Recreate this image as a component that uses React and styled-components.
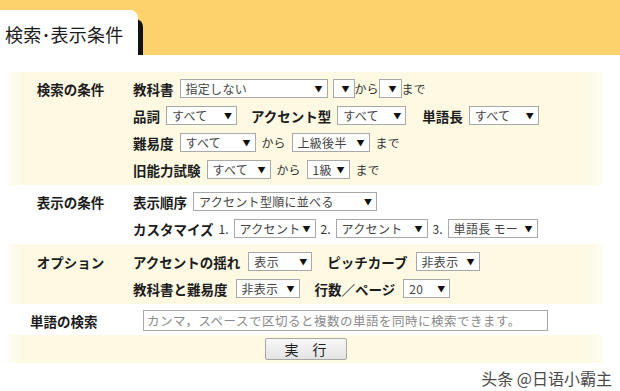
import React from 'react';
import styled, { createGlobalStyle } from 'styled-components';

const GlobalStyle = createGlobalStyle`
  html, body {
    margin: 0;
    padding: 0;
    background: #fff;
  }
  body {
    width: 620px;
    height: 391px;
    overflow: hidden;
    font-family: "Noto Sans CJK JP", "Noto Sans", sans-serif;
    color: #222;
  }
`;

const Header = styled.div`
  height: 55px;
  background: #fdd16c;
  overflow: hidden;
  display: flex;
  align-items: flex-end;
`;

const Tab = styled.div`
  width: 133px;
  height: 45px;
  padding-left: 5px;
  background: #fff;
  border-top-right-radius: 8px;
  box-shadow: 5px 9px 0 #111;
  font-size: 18px;
  line-height: 48px;
  color: #1a1a1a;
  letter-spacing: 0.2px;
`;

const Panel = styled.div`
  padding: 17px 17px 0 8px;
`;

const cream =
  'linear-gradient(to right, #fffdf4, #fdf9e3 14px, #fdf9e3 calc(100% - 14px), #fffdf6)';

const Section = styled.div`
  display: grid;
  grid-template-columns: 125px 1fr;
  padding: ${(p) => p.$pad || '3px 0 2px'};
  background: ${(p) => (p.$cream ? cream : '#fff')};
`;

const SectionLabel = styled.div`
  height: 27px;
  display: flex;
  align-items: center;
  justify-content: ${(p) => (p.$left ? 'flex-start' : 'center')};
  padding-left: ${(p) => (p.$left ? '22px' : '0')};
  font-size: 13.5px;
  font-weight: 700;
  color: #1c1c1c;
`;

const Lines = styled.div`
  display: flex;
  flex-direction: column;
`;

const Line = styled.div`
  height: 27px;
  display: flex;
  align-items: center;
  gap: ${(p) => p.$gap || '6px'};
  font-size: 12px;
`;

const Field = styled.span`
  font-size: 13.5px;
  font-weight: 700;
  color: #1c1c1c;
  margin-left: ${(p) => p.$ml || '0'};
`;

const Word = styled.span`
  font-size: 12px;
  color: #333;
  margin: ${(p) => p.$m || '0'};
`;

const SelectBox = styled.span`
  box-sizing: border-box;
  width: ${(p) => p.$w}px;
  height: 19px;
  display: inline-flex;
  align-items: center;
  gap: 2px;
  border: 1px solid #a9a9a9;
  background: #fff;
  padding: 0 4px 0 5px;
  font-size: 12px;
  color: #444;
  margin: ${(p) => p.$m || '0'};
`;

const SelectText = styled.span`
  flex: 1;
  min-width: 0;
  overflow: hidden;
  white-space: nowrap;
  letter-spacing: 0.3px;
`;

const Arrow = styled.span`
  flex: none;
  font-size: 8px;
  color: #111;
  line-height: 1;
`;

const TextInput = styled.input`
  box-sizing: border-box;
  width: 405px;
  height: 21px;
  margin-left: 10px;
  border: 1px solid #a9a9a9;
  padding: 0 3px;
  font-family: inherit;
  font-size: 12.5px;
  letter-spacing: 0.5px;
  &::placeholder {
    color: #8a8a8a;
  }
`;

const ButtonRow = styled.div`
  height: 28px;
  display: flex;
  align-items: center;
  justify-content: center;
  background: ${cream};
`;

const RunButton = styled.button`
  width: 82px;
  height: 22px;
  border: 1px solid #a8a8a8;
  border-radius: 2px;
  background: linear-gradient(#f8f8f8, #e3e3e3);
  font-family: inherit;
  font-size: 14px;
  color: #222;
  letter-spacing: 14px;
  padding: 0 0 0 14px;
`;

const Footer = styled.div`
  display: flex;
  justify-content: flex-end;
  padding: 5px 8px 0 0;
  font-family: "Noto Sans CJK SC", sans-serif;
  font-size: 16px;
  line-height: 20px;
  color: #4a4a4a;
`;

const Select = ({ w, children, m }) => (
  <SelectBox $w={w} $m={m}>
    <SelectText>{children}</SelectText>
    <Arrow>▼</Arrow>
  </SelectBox>
);

const App = () => (
  <>
    <GlobalStyle />
    <Header>
      <Tab>検索･表示条件</Tab>
    </Header>
    <Panel>
      <Section $cream>
        <SectionLabel>検索の条件</SectionLabel>
        <Lines>
          <Line>
            <Field>教科書</Field>
            <Select w={148}>指定しない</Select>
            <Select w={22} m="0 0 0 -1px" />
            <Word $m="0 -6px">から</Word>
            <Select w={23} />
            <Word $m="0 0 0 -6px">まで</Word>
          </Line>
          <Line>
            <Field>品詞</Field>
            <Select w={71}>すべて</Select>
            <Field $ml="8px">アクセント型</Field>
            <Select w={69}>すべて</Select>
            <Field $ml="10px">単語長</Field>
            <Select w={70}>すべて</Select>
          </Line>
          <Line>
            <Field>難易度</Field>
            <Select w={76}>すべて</Select>
            <Word>から</Word>
            <Select w={78}>上級後半</Select>
            <Word>まで</Word>
          </Line>
          <Line>
            <Field>旧能力試験</Field>
            <Select w={64}>すべて</Select>
            <Word>から</Word>
            <Select w={43}>1級</Select>
            <Word>まで</Word>
          </Line>
        </Lines>
      </Section>

      <Section>
        <SectionLabel>表示の条件</SectionLabel>
        <Lines>
          <Line>
            <Field>表示順序</Field>
            <Select w={184}>アクセント型順に並べる</Select>
          </Line>
          <Line $gap="5px">
            <Field>カスタマイズ</Field>
            <Word>1.</Word>
            <Select w={82}>アクセント</Select>
            <Word>2.</Word>
            <Select w={92}>アクセント</Select>
            <Word>3.</Word>
            <Select w={90}>単語長 モー</Select>
          </Line>
        </Lines>
      </Section>

      <Section $cream $pad="4px 0 2px">
        <SectionLabel>オプション</SectionLabel>
        <Lines>
          <Line $gap="8px">
            <Field>アクセントの揺れ</Field>
            <Select w={64}>表示</Select>
            <Field $ml="7px">ピッチカーブ</Field>
            <Select w={64}>非表示</Select>
          </Line>
          <Line $gap="8px">
            <Field>教科書と難易度</Field>
            <Select w={64}>非表示</Select>
            <Field $ml="7px">行数／ページ</Field>
            <Select w={47}>20</Select>
          </Line>
        </Lines>
      </Section>

      <Section $pad="3px 0 1px">
        <SectionLabel $left>単語の検索</SectionLabel>
        <Line>
          <TextInput placeholder="カンマ，スペースで区切ると複数の単語を同時に検索できます。" />
        </Line>
      </Section>

      <ButtonRow>
        <RunButton>実行</RunButton>
      </ButtonRow>
    </Panel>
    <Footer>头条 @日语小霸主</Footer>
  </>
);

export default App;
